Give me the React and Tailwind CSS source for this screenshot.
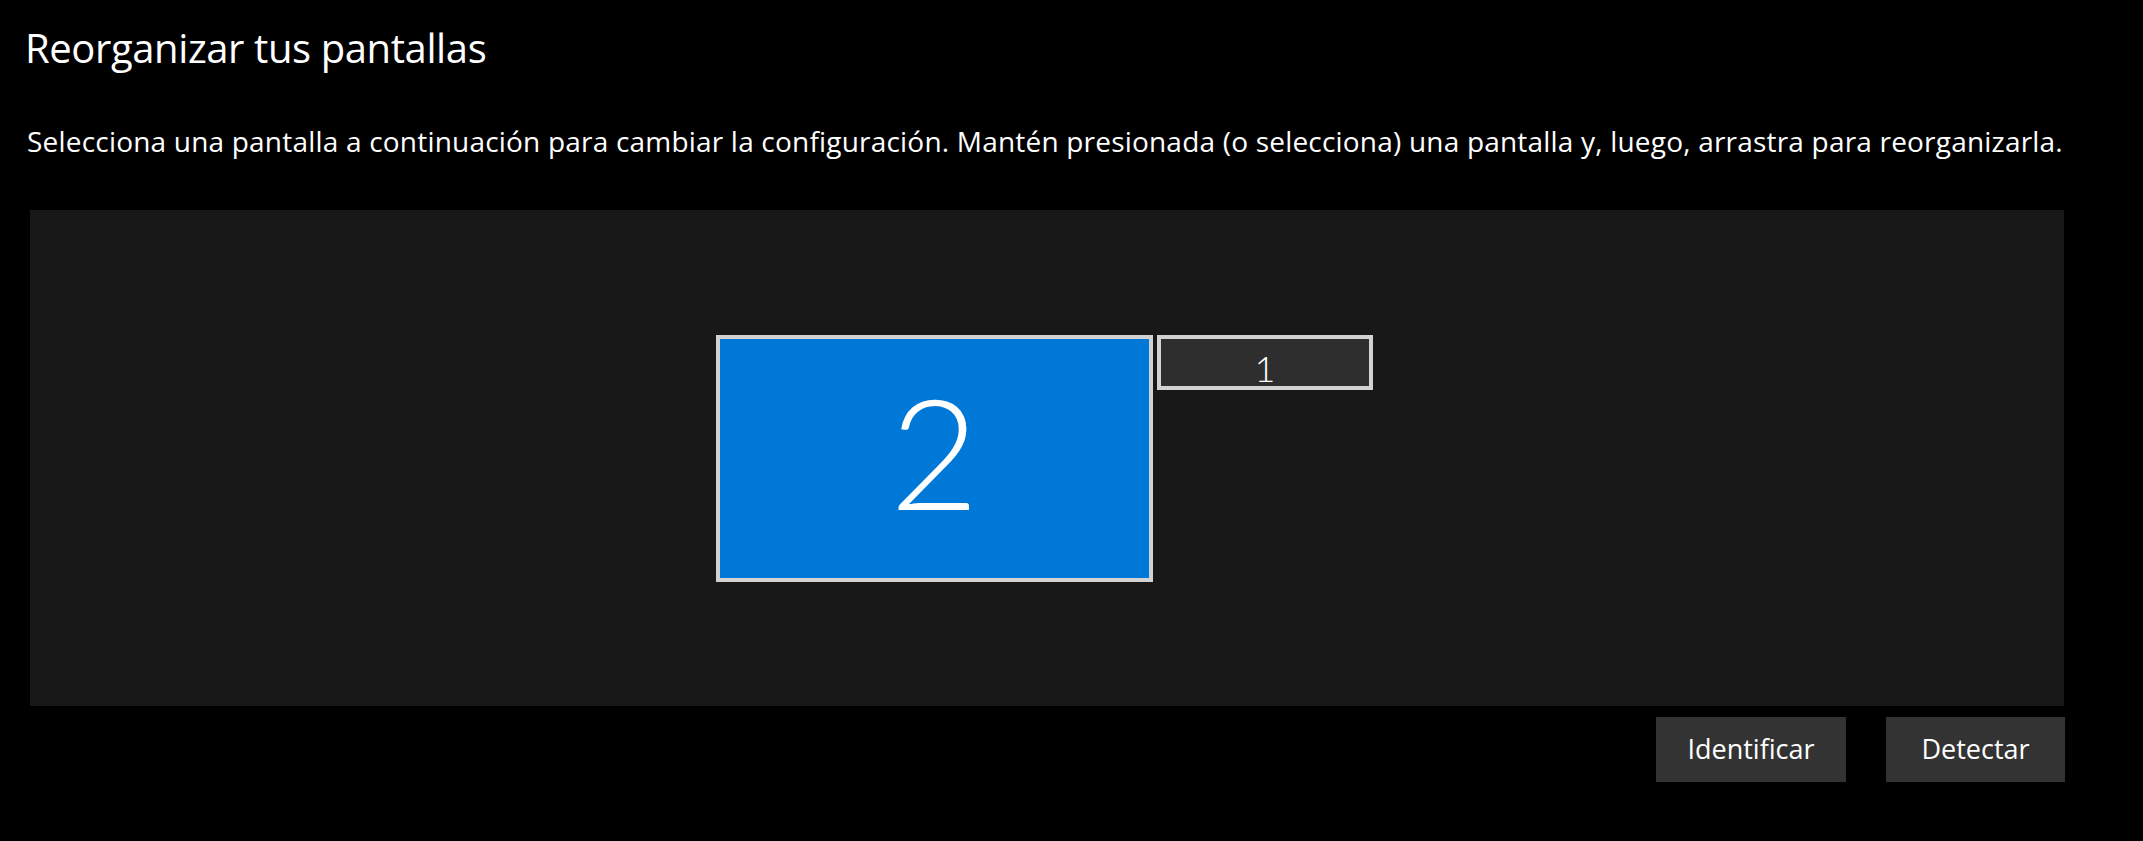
const font = { fontFamily: '"Segoe UI", "Open Sans", "Noto Sans", sans-serif' };

function Monitor({ label, active, className, textClass }) {
  return (
    <div
      className={`absolute flex justify-center overflow-hidden border-4 border-[#d2d2d2] ${
        active ? 'bg-[#0078d7]' : 'bg-[#2e2e2e]'
      } ${className}`}
    >
      <span className={`text-white font-light ${textClass}`} style={{ fontFamily: 'Lato, "Open Sans", sans-serif' }}>
        {label}
      </span>
    </div>
  );
}

export default function App() {
  return (
    <div className="w-full h-[841px] bg-black text-white overflow-hidden" style={font}>
      {/* Header */}
      <h1 className="pl-[25px] pt-[24px] text-[40px] leading-[48px] font-normal tracking-[-0.4px]">
        Reorganizar tus pantallas
      </h1>
      <p className="pl-[27px] mt-[51px] text-[28px] leading-[36px] tracking-[0.2px] whitespace-nowrap">
        Selecciona una pantalla a continuación para cambiar la configuración. Mantén presionada (o selecciona) una
        pantalla y, luego, arrastra para reorganizarla.
      </p>

      {/* Display arrangement canvas */}
      <div className="relative ml-[30px] mt-[51px] w-[2034px] h-[496px] bg-[#181818]">
        <Monitor
          label="2"
          active
          className="left-[686px] top-[125px] w-[437px] h-[247px] items-center"
          textClass="text-[154px] leading-none mb-[16px]"
        />
        <Monitor
          label="1"
          className="left-[1127px] top-[125px] w-[216px] h-[55px] items-start"
          textClass="text-[36px] leading-none mt-[11px]"
        />
      </div>

      {/* Actions */}
      <div className="flex justify-end gap-[40px] w-[2065px] mt-[11px]">
        <button className="w-[190px] h-[65px] bg-[#333333] text-[27px] text-white">Identificar</button>
        <button className="w-[179px] h-[65px] bg-[#333333] text-[27px] text-white">Detectar</button>
      </div>
    </div>
  );
}
